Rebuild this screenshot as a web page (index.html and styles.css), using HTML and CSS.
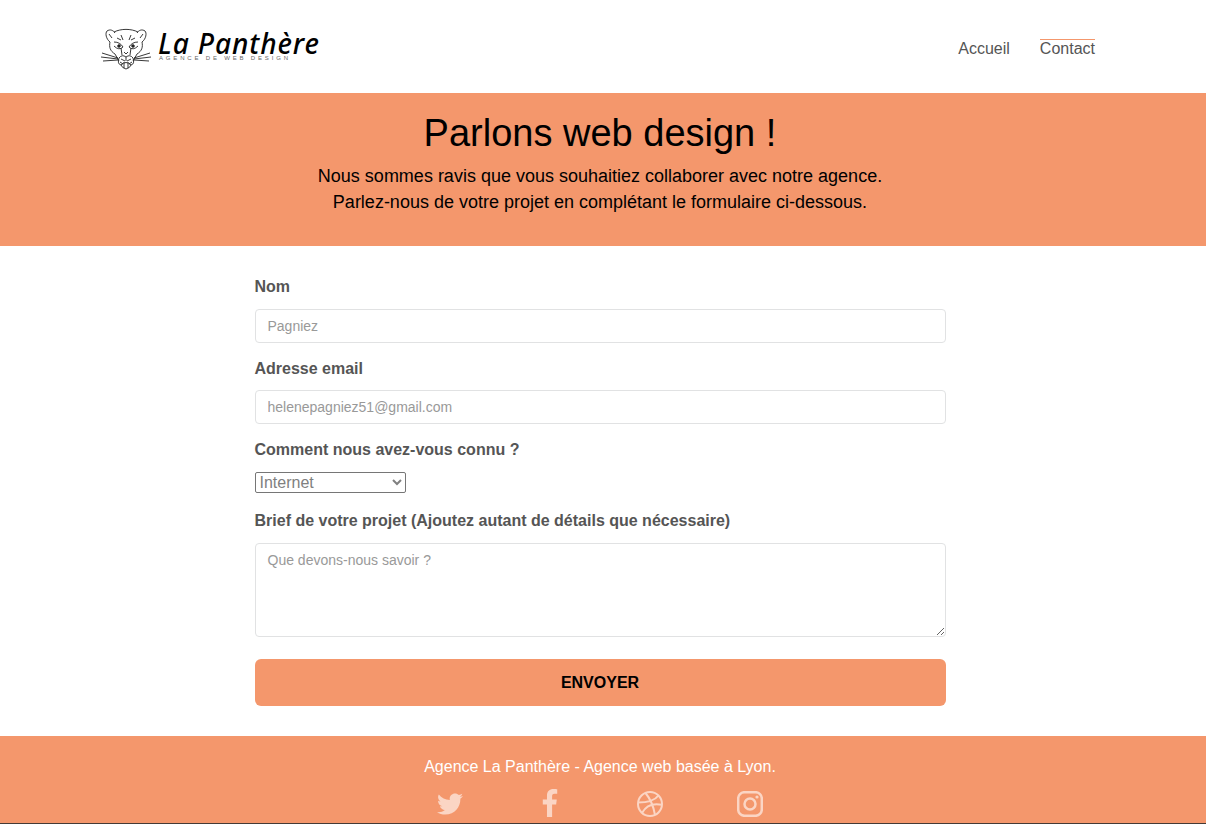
FILE: index.html
```html
<!DOCTYPE html>
<html lang="fr">
<head>
<meta charset="utf-8">
<title>La Panthère - Contact</title>
<link rel="stylesheet" href="styles.css">
</head>
<body>
<header class="header">
  <a class="logo">
    <svg width="222" height="48" viewBox="0 0 222 48">
      <g class="panther">
        <path d="M9 18C5 15 4 9 6 7C9 5 12 6 14 9M41 18C45 15 46 9 44 7C41 5 38 6 36 9M13 8C20 4.500 30 4.500 37 8M8 10L11 14M42 10L39 14M9 18C8 23 9 27 14 30L18 37M41 18C42 23 41 27 36 30L32 37"/>
        <path d="M13 18Q19 18 22 23M37 18Q31 18 28 23M13 22Q18 27 22 23M37 22Q32 27 28 23M20 24L21 31M30 24L29 31M23 28L25 30L27 28M16 14L20 16M34 14L30 16M20 11L22 16M30 11L28 16"/>
        <path d="M18 34Q21 30 25 33Q29 30 32 34M18 34Q16 40 20 41Q25 36 30 41Q34 40 32 34M25 33V37M20 41Q21 44 25 45Q29 44 30 41M20 35L24 37M30 35L26 37M23 38V44M27 38V44M19 38L22 40M31 38L28 40"/>
        <path d="M1 29L17 34M0 33L17 35M2 37L17 36M49 29L33 34M50 33L33 35M48 37L33 36"/>
        <circle cx="18" cy="22" r="1.3"/><circle cx="32" cy="22" r="1.3"/>
      </g>
      <text class="logo-name" x="57" y="30" textLength="161" lengthAdjust="spacing">La Panthère</text>
      <text class="logo-tag" x="58" y="36" textLength="129">AGENCE DE WEB DESIGN</text>
    </svg>
  </a>
  <nav class="nav">
    <a class="nav-link">Accueil</a>
    <a class="nav-link active">Contact</a>
  </nav>
</header>
<section class="banner">
  <h1 class="title">Parlons web design !</h1>
  <p class="intro">Nous sommes ravis que vous souhaitiez collaborer avec notre agence.<br>Parlez-nous de votre projet en complétant le formulaire ci-dessous.</p>
</section>
<main class="main">
  <form class="form">
    <label class="label" for="name">Nom</label>
    <input class="field" id="name" placeholder="Pagniez">
    <label class="label" for="email">Adresse email</label>
    <input class="field" id="email" placeholder="helenepagniez51@gmail.com">
    <label class="label" for="source">Comment nous avez-vous connu ?</label>
    <select class="select" id="source"><option>Internet</option></select>
    <label class="label" for="brief">Brief de votre projet (Ajoutez autant de détails que nécessaire)</label>
    <textarea class="field area" id="brief" placeholder="Que devons-nous savoir ?"></textarea>
    <button class="submit" type="button">ENVOYER</button>
  </form>
</main>
<footer class="footer">
  <p class="footer-text">Agence La Panthère - Agence web basée à Lyon.</p>
  <div class="socials">
    <svg class="social" viewBox="0 0 512 512"><path d="M459.37 151.716c.325 4.548.325 9.097.325 13.645 0 138.72-105.583 298.558-298.558 298.558-59.452 0-114.68-17.219-161.137-47.106 8.447.974 16.568 1.299 25.34 1.299 49.055 0 94.213-16.568 130.274-44.832-46.132-.975-84.792-31.188-98.112-72.772 6.498.974 12.995 1.624 19.818 1.624 9.421 0 18.843-1.3 27.614-3.573-48.081-9.747-84.143-51.98-84.143-102.985v-1.299c13.969 7.797 30.214 12.67 47.431 13.319-28.264-18.843-46.781-51.005-46.781-87.391 0-19.492 5.197-37.36 14.294-52.954 51.655 63.675 129.3 105.258 216.365 109.807-1.624-7.797-2.599-15.918-2.599-24.04 0-57.828 46.782-104.934 104.934-104.934 30.213 0 57.502 12.67 76.67 33.137 23.715-4.548 46.456-13.32 66.599-25.34-7.798 24.366-24.366 44.833-46.132 57.827 21.117-2.273 41.584-8.122 60.426-16.243-14.292 20.791-32.161 39.308-52.628 54.253z"/></svg>
    <svg class="social fb" viewBox="0 0 264 512"><path d="M76.7 512V283H0v-91h76.7v-71.7C76.7 42.4 124.3 0 193.8 0c33.3 0 61.9 2.5 70.2 3.6V85h-48.2c-37.8 0-45.1 18-45.1 44.3V192H256l-11.7 91h-73.6v229"/></svg>
    <svg class="social line" viewBox="0 0 26 26"><circle cx="13" cy="13" r="12"/><path d="M8.5 2C13.5 8 16.5 15 18 24M1 11.5C9 11.5 17 10.5 21.5 4.5M5 22C9 14.5 16 12 25 13.8"/></svg>
    <svg class="social line insta" viewBox="0 0 26 26"><rect x="1.2" y="1.2" width="23.6" height="23.6" rx="6.2"/><circle cx="13" cy="13" r="5.5"/><circle class="dot" cx="20" cy="6" r="1.6"/></svg>
  </div>
</footer>
</body>
</html>
```
FILE: styles.css
```css
* { box-sizing: border-box; }
body { margin: 0; height: 824px; overflow: hidden; display: flex; flex-direction: column; background: #fff; color: #555; font: 16px/24px "Liberation Sans", Arial, sans-serif; }
.header { height: 93px; flex: none; display: flex; justify-content: space-between; align-items: flex-start; padding: 24px 111px 0 101px; }
.logo svg { display: block; }
.panther { fill: none; stroke: #222; stroke-width: .9; }
.panther circle { fill: #222; }
.logo-name { font: italic 500 28px "Noto Sans", sans-serif; fill: #000; }
.logo-tag { font: 6px "Liberation Sans", Arial, sans-serif; fill: #666; }
.nav { display: flex; gap: 30px; padding-top: 15px; }
.nav-link { line-height: 18px; border-top: 1px solid transparent; }
.active { border-top-color: #f4976c; }
.banner { height: 153px; flex: none; padding: 19px 6px 0 0; background: #f4976c; color: #000; text-align: center; }
.title { margin: 0; font-size: 38px; font-weight: 400; line-height: 42px; }
.intro { margin: 9px 0 0; font-size: 18px; line-height: 26px; }
.main { height: 490px; flex: none; padding: 29.1px 0 0 254.5px; }
.form { width: 691px; display: flex; flex-direction: column; align-items: flex-start; }
.label { font-weight: 700; line-height: 24px; margin-bottom: 9.9px; }
.field { width: 100%; height: 34px; margin: 0 0 13.55px; padding: 6px 12px; border: 1px solid #e1e2e3; border-radius: 4px; background: #fff; font: 14px/20px "Liberation Sans", Arial, sans-serif; }
.field::placeholder { color: #999; opacity: 1; }
.select { width: 151px; height: 21px; margin: .4px 0 15.7px; padding: 0; border: 1px solid #767676; border-radius: 2px; background: #fff; color: #808080; font: 16px "Liberation Sans", Arial, sans-serif; }
.area { height: 94px; margin-bottom: 22px; resize: vertical; }
.submit { width: 100%; height: 47px; padding: 1px 0 0; border: 0; border-radius: 6px; background: #f4976c; color: #000; font: 700 16px "Liberation Sans", Arial, sans-serif; }
.footer { height: 88px; flex: none; padding: 19px 6px 0 0; background: #f4976c; border-bottom: 1px solid #443a36; color: #fff; text-align: center; }
.footer-text { margin: 0; }
.socials { width: 400px; margin: 9px auto 0; display: grid; grid-template-columns: repeat(4, 1fr); justify-items: center; align-items: center; height: 32px; }
.social { width: 26px; height: 26px; fill: #fbd5c4; }
.fb { width: 16px; height: 28px; margin-top: -2px; }
.line { fill: none; stroke: #fbd5c4; stroke-width: 2; }
.insta { stroke-width: 2.5; }
.dot { fill: #fbd5c4; stroke: none; }
```
